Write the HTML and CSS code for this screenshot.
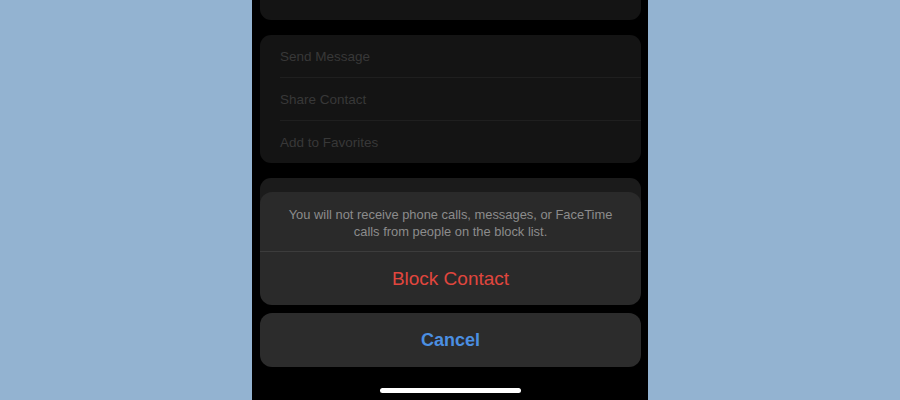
FILE: index.html
```html
<!DOCTYPE html>
<html>
  <head>
    <title>Block Contact</title>
    <link rel="stylesheet" href="styles.css">
  </head>
  <body>
    <div class="phone">
      <div class="card card-top"></div>
      <div class="card list">
        <div class="row">Send Message</div>
        <div class="row">Share Contact</div>
        <div class="row">Add to Favorites</div>
      </div>
      <div class="card card-behind"></div>

      <div class="sheet">
        <div class="sheet-group">
          <p class="sheet-message">You will not receive phone calls, messages, or FaceTime calls from people on the block list.</p>
          <button class="sheet-btn destructive">Block Contact</button>
        </div>
        <button class="sheet-btn cancel">Cancel</button>
        <div class="home-indicator"></div>
      </div>
    </div>
  </body>
</html>
```

FILE: styles.css
```css
body {
  margin: 0;
  background-color: #93b3d1;
  font-family: "Liberation Sans", Arial, sans-serif;
}

.phone {
  position: relative;
  width: 381px;
  height: 400px;
  margin: 0 auto;
  padding: 0 7px 0 8px;
  background-color: #000;
  overflow: hidden;
  display: flex;
  flex-direction: column;
  gap: 15px;
}

.card {
  background-color: #141414;
  border-radius: 11px;
  flex-shrink: 0;
}

.card-top {
  height: 20px;
  border-radius: 0 0 11px 11px;
}

.list {
  height: 128px;
  display: flex;
  flex-direction: column;
}

.row {
  flex: 1;
  display: flex;
  align-items: center;
  margin-left: 20px;
  font-size: 13.5px;
  color: #383838;
  border-bottom: 1px solid #1f1f1f;
}

.row:last-child {
  border-bottom: none;
}

.card-behind {
  height: 120px;
  background-color: #1b1b1b;
}

.sheet {
  position: absolute;
  left: 8px;
  right: 7px;
  bottom: 0;
  display: flex;
  flex-direction: column;
  gap: 8px;
}

.sheet-group {
  background-color: #2a2a2a;
  border-radius: 12px;
  overflow: hidden;
  display: flex;
  flex-direction: column;
}

.sheet-message {
  margin: 0;
  padding: 14px 20px 11px;
  font-size: 12.9px;
  line-height: 17px;
  color: #8c8c8c;
  text-align: center;
  border-bottom: 1px solid #3c3c3c;
}

.sheet-btn {
  height: 53px;
  border: none;
  background: none;
  font-family: inherit;
  font-size: 19px;
  cursor: pointer;
}

.destructive {
  color: #e0463e;
}

.cancel {
  height: 54px;
  border-radius: 12px;
  background-color: #2c2c2c;
  color: #4b8fe2;
  font-size: 18px;
  font-weight: 600;
}

.home-indicator {
  width: 141px;
  height: 5px;
  margin: 13px auto 7px;
  border-radius: 3px;
  background-color: #fff;
}
```
